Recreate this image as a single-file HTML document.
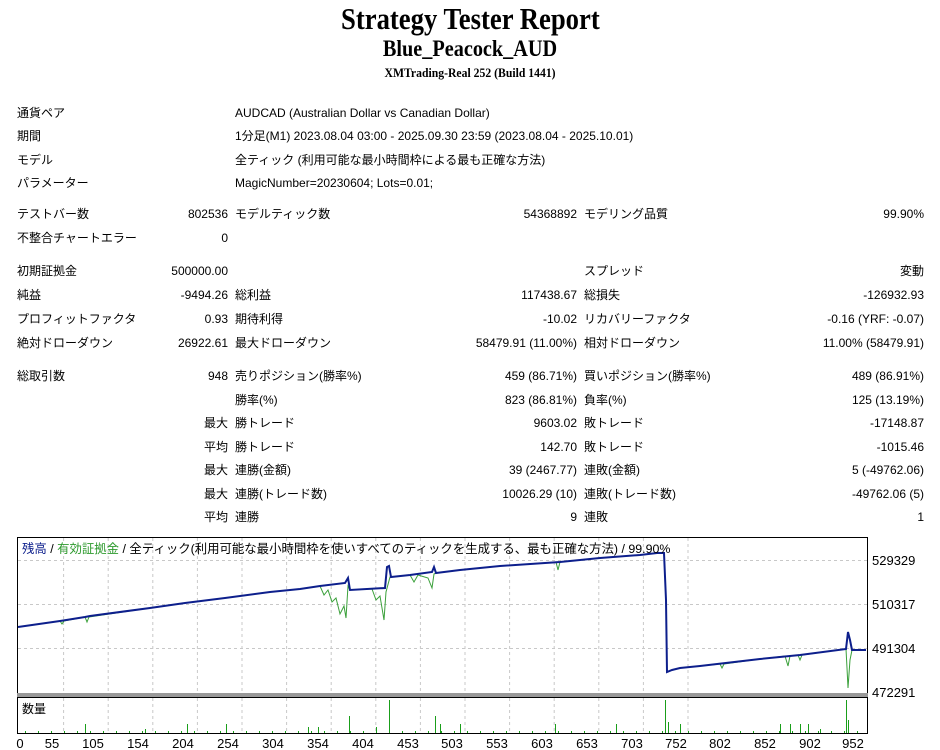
<!DOCTYPE html>
<html><head><meta charset="utf-8"><style>
body{margin:0;background:#fff;width:940px;height:750px;overflow:hidden;position:relative;font-family:"Liberation Sans","Noto Sans CJK JP",sans-serif;font-size:12px;color:#000}
.t{position:absolute;white-space:nowrap;line-height:14px}
.rr{text-align:right}
.h{position:absolute;left:0;width:940px;text-align:center;font-family:"Liberation Serif",serif;font-weight:bold;white-space:nowrap}
</style></head><body>
<div class="h" style="top:2px;font-size:31px;line-height:34px"><span style="display:inline-block;transform:scaleX(0.86)">Strategy Tester Report</span></div>
<div class="h" style="top:36px;font-size:23px;line-height:26px"><span style="display:inline-block;transform:scaleX(0.88)">Blue_Peacock_AUD</span></div>
<div class="h" style="top:65px;font-size:13px;line-height:16px"><span style="display:inline-block;transform:scaleX(0.9)">XMTrading-Real 252 (Build 1441)</span></div>

<div class="t" style="left:17px;top:106px">通貨ペア</div><div class="t" style="left:235px;top:106px">AUDCAD (Australian Dollar vs Canadian Dollar)</div>
<div class="t" style="left:17px;top:129px">期間</div><div class="t" style="left:235px;top:129px">1分足(M1) 2023.08.04 03:00 - 2025.09.30 23:59 (2023.08.04 - 2025.10.01)</div>
<div class="t" style="left:17px;top:153px">モデル</div><div class="t" style="left:235px;top:153px">全ティック (利用可能な最小時間枠による最も正確な方法)</div>
<div class="t" style="left:17px;top:176px">パラメーター</div><div class="t" style="left:235px;top:176px">MagicNumber=20230604; Lots=0.01;</div>

<div id="g"></div>
<script>
var rows=[
[207,"テストバー数","802536","モデルティック数","54368892","モデリング品質","99.90%"],
[231,"不整合チャートエラー","0","","","",""],
[264,"初期証拠金","500000.00","","","スプレッド","変動"],
[288,"純益","-9494.26","総利益","117438.67","総損失","-126932.93"],
[312,"プロフィットファクタ","0.93","期待利得","-10.02","リカバリーファクタ","-0.16 (YRF: -0.07)"],
[336,"絶対ドローダウン","26922.61","最大ドローダウン","58479.91 (11.00%)","相対ドローダウン","11.00% (58479.91)"],
[369,"総取引数","948","売りポジション(勝率%)","459 (86.71%)","買いポジション(勝率%)","489 (86.91%)"],
[393,"","","勝率(%)","823 (86.81%)","負率(%)","125 (13.19%)"],
[416,"","最大","勝トレード","9603.02","敗トレード","-17148.87"],
[440,"","平均","勝トレード","142.70","敗トレード","-1015.46"],
[463,"","最大","連勝(金額)","39 (2467.77)","連敗(金額)","5 (-49762.06)"],
[487,"","最大","連勝(トレード数)","10026.29 (10)","連敗(トレード数)","-49762.06 (5)"],
[510,"","平均","連勝","9","連敗","1"]];
var h="";
rows.forEach(function(r){var y=r[0];
if(r[1])h+='<div class="t" style="left:17px;top:'+y+'px">'+r[1]+'</div>';
if(r[2])h+='<div class="t rr" style="right:712px;top:'+y+'px">'+r[2]+'</div>';
if(r[3])h+='<div class="t" style="left:235px;top:'+y+'px">'+r[3]+'</div>';
if(r[4])h+='<div class="t rr" style="right:363px;top:'+y+'px">'+r[4]+'</div>';
if(r[5])h+='<div class="t" style="left:584px;top:'+y+'px">'+r[5]+'</div>';
if(r[6])h+='<div class="t rr" style="right:16px;top:'+y+'px">'+r[6]+'</div>';
});
document.getElementById("g").innerHTML=h;
</script>

<svg style="position:absolute;left:0;top:0" width="940" height="750">
<g stroke="#c8c8c8" stroke-dasharray="3,3" stroke-width="1">
<line x1="18" y1="560.5" x2="867" y2="560.5"/><line x1="18" y1="604.5" x2="867" y2="604.5"/><line x1="18" y1="648.5" x2="867" y2="648.5"/>
<g id="vg"></g>
</g>
<g id="vol" stroke="#1a9e1a" stroke-width="1"></g>
<rect x="17.5" y="537.5" width="850" height="156" fill="none" stroke="#000"/>
<rect x="17" y="693" width="851" height="4" fill="#999"/>
<rect x="17.5" y="697.5" width="850" height="36" fill="none" stroke="#000"/>
<polyline fill="none" stroke="#3aa03a" stroke-width="1" points="18,627 60,621 62,624 64,621 85,617 87,622 89,617 150,608 185,603 225,598 270,592 300,589 320,586 324,595 328,590 332,602 336,598 340,614 344,606 346,618 348,586 350,590 372,589 376,600 380,596 384,620 386,592 390,577 410,575 414,582 418,575 428,578 432,588 434,574 436,573 460,570 500,566 556,562 558,570 560,562 600,558 640,555 657,553 664,553 666,600 667,672 672,670 680,668 700,666 720,664 722,668 724,664 760,659 785,656 788,666 790,656 798,655 800,660 802,655 846,649 847,668 848,688 850,660 852,650 860,650 866,650"/>
<polyline fill="none" stroke="#0d1f8c" stroke-width="2" points="18,627 60,621 85,617 90,616 150,608 185,603 225,598 270,592 300,589 320,586 345,583 348,578 350,590 385,588 387,567 389,566 391,577 410,575 432,572 434,567 436,573 460,570 500,566 560,562 600,558 640,555 657,553 664,553 666,600 667,672 672,670 680,668 700,666 760,659 800,655 846,649 848,632 850,640 852,650 860,650 866,650"/>
<g font-family="Liberation Sans,'Noto Sans CJK JP',sans-serif" font-size="13" fill="#000">
<text x="872" y="565">529329</text><text x="872" y="609">510317</text><text x="872" y="653">491304</text><text x="872" y="697">472291</text>
<g id="xl" text-anchor="middle"></g>
</g>
<text x="22" y="553" font-family="Liberation Sans,'Noto Sans CJK JP',sans-serif" font-size="12.4"><tspan fill="#0d1f8c">残高</tspan> / <tspan fill="#2e9a2e">有効証拠金</tspan> / 全ティック(利用可能な最小時間枠を使いすべてのティックを生成する、最も正確な方法) / 99.90%</text>
<text x="22" y="713" font-family="Liberation Sans,'Noto Sans CJK JP',sans-serif" font-size="12">数量</text>
</svg>
<script>
var vg="",xl="",labs=[0,55,105,154,204,254,304,354,404,453,503,553,603,653,703,752,802,852,902,952],
xs=[20,52,93,138,183,228,273,318,363,408,452,497,542,587,632,676,720,765,810,853];
for(var i=1;i<=15;i++){var x=19+44.6*i;if(x<866)vg+='<line x1="'+x+'" y1="538" x2="'+x+'" y2="693"/><line x1="'+x+'" y1="698" x2="'+x+'" y2="733"/>';}
document.getElementById("vg").innerHTML=vg;
labs.forEach(function(l,i){xl+='<text x="'+xs[i]+'" y="748">'+l+'</text>';});
document.getElementById("xl").innerHTML=xl;
var v=[[85,724],[145,729],[187,724],[226,724],[308,727],[318,727],[349,716],[376,727],[389,700],[435,716],[440,724],[460,724],[555,724],[616,724],[665,700],[668,722],[680,724],[780,724],[790,724],[800,724],[808,724],[820,729],[846,700],[848,720]];
var vh="";v.forEach(function(p){vh+='<line x1="'+p[0]+'.5" y1="733" x2="'+p[0]+'.5" y2="'+p[1]+'"/>';});
for(var x=25;x<866;x+=13)vh+='<line x1="'+x+'.5" y1="733" x2="'+x+'.5" y2="731"/>';
document.getElementById("vol").innerHTML=vh;
</script>
</body></html>
